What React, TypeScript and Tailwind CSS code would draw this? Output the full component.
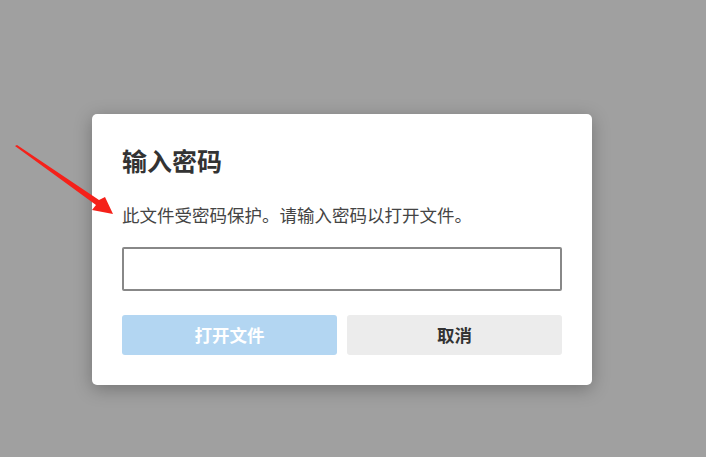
export default function App() {
    return (
        <div
            className="relative w-[706px] h-[457px] bg-[#a0a0a0] overflow-hidden pt-[114px] pl-[92px]"
            style={{ fontFamily: '"Noto Sans CJK SC", "Noto Sans", sans-serif' }}
        >
            <div className="w-[500px] bg-white rounded-[5px] shadow-[0_4px_18px_rgba(0,0,0,0.28)] px-[30px] pt-[30px] pb-[30px]">
                <h1 className="text-[25px] leading-[32px] font-bold text-[#333]">输入密码</h1>
                <p className="mt-[27px] text-[17.5px] leading-[24px] text-[#444]">
                    此文件受密码保护。请输入密码以打开文件。
                </p>
                <input
                    type="password"
                    className="mt-[20px] block w-[440px] h-[44px] border-2 border-[#888] rounded-[2px] bg-white outline-none px-2"
                />
                <div className="mt-[24px] flex gap-[10px]">
                    <button className="flex-1 h-[40px] rounded-[3px] bg-[#b3d6f2] text-white text-[17.5px] font-bold">
                        打开文件
                    </button>
                    <button className="flex-1 h-[40px] rounded-[3px] bg-[#ececec] text-[#333] text-[17.5px] font-bold">
                        取消
                    </button>
                </div>
            </div>

            <svg className="absolute left-0 top-0" width="706" height="457" viewBox="0 0 706 457">
                <polygon points="15,146 17,145 99,200 105,197 113,214 92,210 96,205" fill="#f5211a" />
            </svg>
        </div>
    );
}
